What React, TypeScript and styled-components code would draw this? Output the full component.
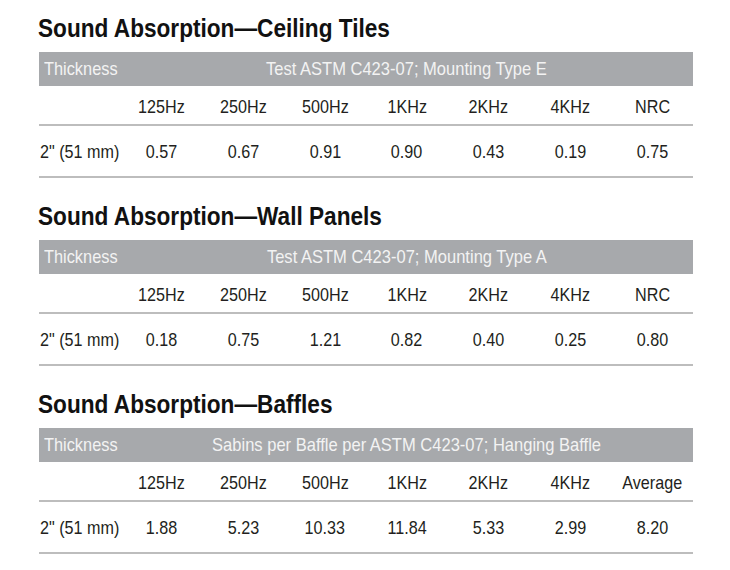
import React from "react";
import styled, { createGlobalStyle } from "styled-components";

const GlobalStyle = createGlobalStyle`
  html, body {
    margin: 0;
    padding: 0;
    background: #ffffff;
  }
  body {
    font-family: "Liberation Sans Narrow", "Arial Narrow", "Liberation Sans", Arial, sans-serif;
    color: #231f20;
  }
`;

const Page = styled.div`
  width: 654px;
  padding: 13px 0 0 39px;
  display: flex;
  flex-direction: column;
  gap: 23px;
`;

const Section = styled.section`
  display: flex;
  flex-direction: column;
`;

const Title = styled.h2`
  margin: 0 0 9px -1px;
  font-size: 26px;
  line-height: 30px;
  font-weight: 700;
  color: #111111;
  white-space: nowrap;
`;

/* condensed rendering of the narrow typeface */
const Narrow = styled.span<{ $origin?: "left" | "center"; $scale?: number }>`
  display: inline-block;
  transform: scaleX(${(p) => p.$scale ?? 0.85});
  transform-origin: ${(p) => p.$origin ?? "center"} center;
`;

const Grid = styled.div`
  display: grid;
  grid-template-columns: repeat(8, minmax(0, 1fr));
`;

const BarCell = styled.div<{ $span?: number; $align?: "left" | "center" }>`
  grid-column: span ${(p) => p.$span ?? 1};
  background: #a7a9ac;
  color: #f3f3f3;
  height: 34px;
  line-height: 33px;
  font-size: 19px;
  text-align: ${(p) => p.$align ?? "left"};
  padding-left: ${(p) => (p.$align === "center" ? 0 : 5)}px;
  white-space: nowrap;
`;

const Cell = styled.div<{ $kind: "head" | "data"; $align?: "left" | "center" }>`
  height: ${(p) => (p.$kind === "head" ? 38 : 50)}px;
  line-height: ${(p) => (p.$kind === "head" ? 42 : 52)}px;
  border-bottom: 2px solid #bdbdbd;
  font-size: 19px;
  text-align: ${(p) => p.$align ?? "center"};
  padding-left: ${(p) => (p.$align === "left" ? 1 : 0)}px;
  white-space: nowrap;
`;

type TableData = {
  title: string;
  caption: string;
  heads: string[];
  values: string[];
};

const tables: TableData[] = [
  {
    title: "Sound Absorption\u2014Ceiling Tiles",
    caption: "Test ASTM C423-07; Mounting Type E",
    heads: ["125Hz", "250Hz", "500Hz", "1KHz", "2KHz", "4KHz", "NRC"],
    values: ["0.57", "0.67", "0.91", "0.90", "0.43", "0.19", "0.75"],
  },
  {
    title: "Sound Absorption\u2014Wall Panels",
    caption: "Test ASTM C423-07; Mounting Type A",
    heads: ["125Hz", "250Hz", "500Hz", "1KHz", "2KHz", "4KHz", "NRC"],
    values: ["0.18", "0.75", "1.21", "0.82", "0.40", "0.25", "0.80"],
  },
  {
    title: "Sound Absorption\u2014Baffles",
    caption: "Sabins per Baffle per ASTM C423-07; Hanging Baffle",
    heads: ["125Hz", "250Hz", "500Hz", "1KHz", "2KHz", "4KHz", "Average"],
    values: ["1.88", "5.23", "10.33", "11.84", "5.33", "2.99", "8.20"],
  },
];

export default function App() {
  return (
    <>
      <GlobalStyle />
      <Page>
        {tables.map((t) => (
          <Section key={t.title}>
            <Title>
              <Narrow $origin="left" $scale={0.87}>
                {t.title}
              </Narrow>
            </Title>
            <Grid>
              <BarCell>
                <Narrow $origin="left" $scale={0.86}>
                  Thickness
                </Narrow>
              </BarCell>
              <BarCell $span={7} $align="center">
                <Narrow $scale={0.87}>{t.caption}</Narrow>
              </BarCell>
              <Cell $kind="head" />
              {t.heads.map((h) => (
                <Cell key={h} $kind="head">
                  <Narrow>{h}</Narrow>
                </Cell>
              ))}
              <Cell $kind="data" $align="left">
                <Narrow $origin="left">2" (51 mm)</Narrow>
              </Cell>
              {t.values.map((v, i) => (
                <Cell key={i} $kind="data">
                  <Narrow>{v}</Narrow>
                </Cell>
              ))}
            </Grid>
          </Section>
        ))}
      </Page>
    </>
  );
}
